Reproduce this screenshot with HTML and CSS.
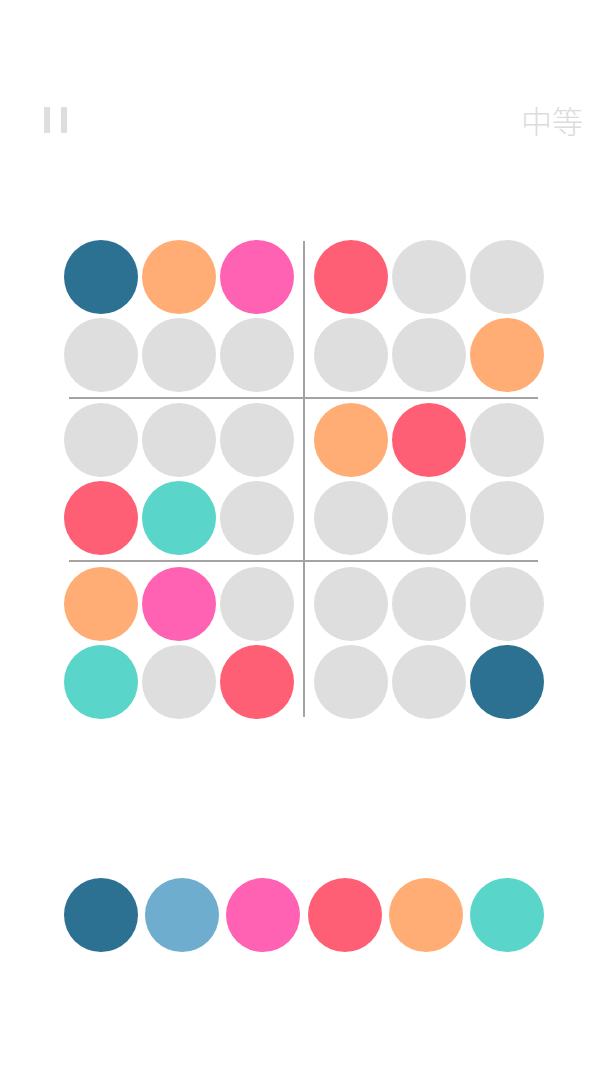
FILE: index.html
```html
<!DOCTYPE html>
<html lang="zh">
<head>
    <meta charset="UTF-8">
    <meta name="viewport" content="width=device-width, initial-scale=1.0">
    <title>Color Sudoku</title>
    <link rel="stylesheet" href="styles.css">
</head>
<body>
    <div class="screen">
        <div class="topbar">
            <div class="pause">
                <span class="bar"></span>
                <span class="bar"></span>
            </div>
            <div class="level">中等</div>
        </div>

        <div class="board">
            <div class="box box-1">
                <span class="dot blue"></span><span class="dot orange"></span><span class="dot pink"></span>
                <span class="dot"></span><span class="dot"></span><span class="dot"></span>
            </div>
            <div class="box box-2">
                <span class="dot red"></span><span class="dot"></span><span class="dot"></span>
                <span class="dot"></span><span class="dot"></span><span class="dot orange"></span>
            </div>
            <div class="box box-3">
                <span class="dot"></span><span class="dot"></span><span class="dot"></span>
                <span class="dot red"></span><span class="dot teal"></span><span class="dot"></span>
            </div>
            <div class="box box-4">
                <span class="dot orange"></span><span class="dot red"></span><span class="dot"></span>
                <span class="dot"></span><span class="dot"></span><span class="dot"></span>
            </div>
            <div class="box box-5">
                <span class="dot orange"></span><span class="dot pink"></span><span class="dot"></span>
                <span class="dot teal"></span><span class="dot"></span><span class="dot red"></span>
            </div>
            <div class="box box-6">
                <span class="dot"></span><span class="dot"></span><span class="dot"></span>
                <span class="dot"></span><span class="dot"></span><span class="dot blue"></span>
            </div>

            <div class="line-v"></div>
            <div class="line-h line-h-1"></div>
            <div class="line-h line-h-2"></div>
        </div>

        <div class="palette">
            <span class="dot blue"></span>
            <span class="dot sky"></span>
            <span class="dot pink"></span>
            <span class="dot red"></span>
            <span class="dot orange"></span>
            <span class="dot teal"></span>
        </div>
    </div>
</body>
</html>
```

FILE: styles.css
```css
* {
    box-sizing: border-box;
    margin: 0;
    padding: 0;
}

body {
    background-color: #fff;
    font-family: "Noto Sans CJK SC", "Noto Sans", sans-serif;
}

.screen {
    width: 608px;
    height: 1080px;
    padding-top: 104px;
    overflow: hidden;
}

.topbar {
    display: flex;
    justify-content: space-between;
    align-items: center;
    height: 32px;
    padding: 0 25px 0 44px;
}

.pause {
    display: flex;
    gap: 11px;
}

.pause .bar {
    width: 6px;
    height: 26px;
    background-color: #dedede;
}

.level {
    font-size: 31px;
    line-height: 32px;
    font-weight: 300;
    color: #dcdcdc;
}

.board {
    display: grid;
    grid-template-columns: 230px 20px 230px;
    grid-template-rows: 152px 11px 152px 12px 152px;
    width: 480px;
    margin: 104px auto 0;
}

.box {
    display: grid;
    grid-template-columns: repeat(3, 74px);
    grid-auto-rows: 74px;
    gap: 4px;
}

.box-1 { grid-area: 1 / 1; }
.box-2 { grid-area: 1 / 3; }
.box-3 { grid-area: 3 / 1; }
.box-4 { grid-area: 3 / 3; }
.box-5 { grid-area: 5 / 1; }
.box-6 { grid-area: 5 / 3; }

.line-v {
    grid-column: 2;
    grid-row: 1 / -1;
    justify-self: center;
    width: 2px;
    margin: 1px 0 2px;
    background-color: #a3a3a3;
}

.line-h {
    grid-column: 1 / -1;
    align-self: center;
    height: 2px;
    margin: 0 6px 0 5px;
    background-color: #a3a3a3;
}

.line-h-1 { grid-row: 2; }
.line-h-2 { grid-row: 4; }

.dot {
    display: block;
    width: 74px;
    height: 74px;
    border-radius: 50%;
    background-color: #dedede;
}

.dot.blue { background-color: #2c7192; }
.dot.sky { background-color: #6eadcd; }
.dot.pink { background-color: #ff62b3; }
.dot.red { background-color: #ff5f74; }
.dot.orange { background-color: #ffad75; }
.dot.teal { background-color: #5ad5c9; }

.palette {
    display: flex;
    justify-content: space-between;
    width: 481px;
    margin: 159px auto 0;
}
```
